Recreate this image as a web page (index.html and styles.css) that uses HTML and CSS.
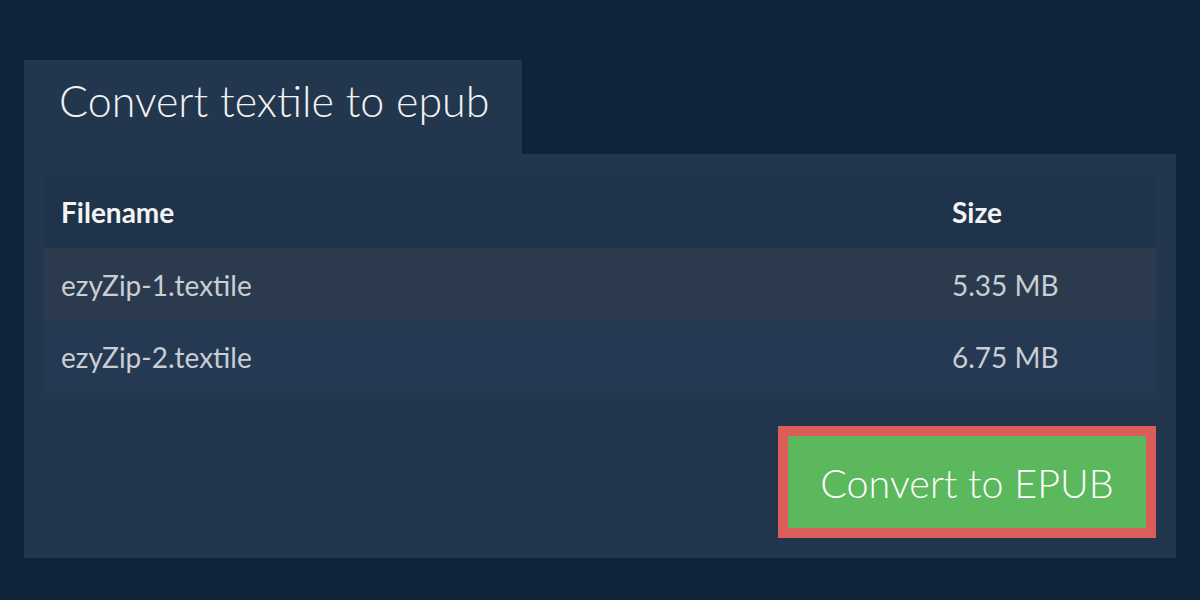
FILE: index.html
```html
<!DOCTYPE html>
<html lang="en">
<head>
<meta charset="utf-8">
<title>Convert textile to epub</title>
<link rel="stylesheet" href="styles.css">
</head>
<body>
<div class="page">
  <div class="tab"><h1 class="title">Convert textile to epub</h1></div>
  <div class="panel">
    <table class="files">
      <thead>
        <tr><th class="col-name">Filename</th><th class="col-size">Size</th></tr>
      </thead>
      <tbody>
        <tr class="row-odd"><td>ezyZip-1.textile</td><td>5.35 MB</td></tr>
        <tr class="row-even"><td>ezyZip-2.textile</td><td>6.75 MB</td></tr>
      </tbody>
    </table>
    <div class="actions">
      <button class="convert">Convert to EPUB</button>
    </div>
  </div>
</div>
</body>
</html>
```

FILE: styles.css
```css
html, body {
  margin: 0;
  padding: 0;
}
body {
  background: #0f2339;
  font-family: Lato, "Open Sans", sans-serif;
  width: 1200px;
  height: 600px;
  overflow: hidden;
}
.page {
  padding: 60px 24px 0;
}
.tab {
  display: inline-block;
  background: #22364e;
  padding: 16px 33px 28px 35px;
}
.title {
  margin: 0;
  font-weight: 300;
  font-size: 43px;
  line-height: 50px;
  color: #f2f2f2;
}
.panel {
  background: #22364e;
  padding: 22px 20px 20px;
}
.files {
  width: 100%;
  border-collapse: collapse;
  font-size: 28px;
}
.files th {
  text-align: left;
  font-weight: 700;
  font-size: 28px;
  color: #f4f4f4;
  height: 72px;
  padding: 0 17px;
  background: #1f334a;
}
.files .col-size {
  width: 187px;
}
.files td {
  color: #c9ced4;
  padding: 0 17px;
  height: 72px;
}
.row-odd td {
  background: #2b3b4d;
  height: 73px;
}
.row-even td {
  background: #253a52;
}
.actions {
  display: flex;
  justify-content: flex-end;
  margin-top: 33px;
}
.convert {
  font-family: Lato, "Open Sans", sans-serif;
  font-weight: 300;
  font-size: 39.5px;
  color: #ffffff;
  background: #5cb85c;
  border: 10px solid #db5e5b;
  height: 112px;
  width: 378px;
  padding: 0;
  box-sizing: border-box;
}
```
